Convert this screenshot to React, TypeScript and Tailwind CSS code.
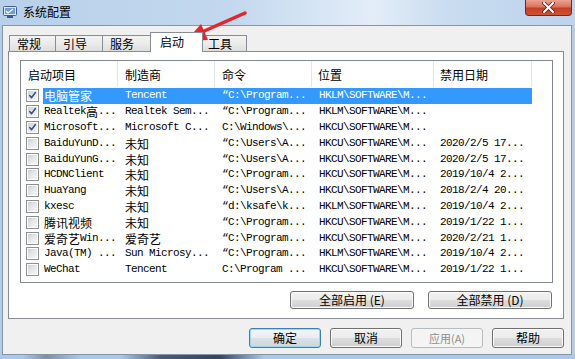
import React from "react";

const CJK = /([\u2E80-\u9FFF\uF900-\uFAFF\uFF00-\uFFEF]+)/;

function Mixed({ text }: { text: string }) {
  const parts = text.split(CJK).filter((p) => p.length > 0);
  return (
    <>
      {parts.map((p, i) =>
        /[\u2E80-\u9FFF\uF900-\uFAFF\uFF00-\uFFEF]/.test(p) ? (
          <span key={i} className="font-['Noto_Sans_CJK_SC',sans-serif] text-[12px] leading-[15px]">
            {p}
          </span>
        ) : (
          <span key={i} className="font-['Liberation_Mono',monospace] text-[11px] tracking-[-0.6px] leading-[15px]">
            {p}
          </span>
        )
      )}
    </>
  );
}

type Row = { on: boolean; name: string; maker: string; cmd: string; loc: string; date: string };

const rows: Row[] = [
  { on: true, name: "电脑管家", maker: "Tencent", cmd: "“C:\\Program...", loc: "HKLM\\SOFTWARE\\M...", date: "" },
  { on: true, name: "Realtek高...", maker: "Realtek Sem...", cmd: "“C:\\Program...", loc: "HKLM\\SOFTWARE\\M...", date: "" },
  { on: true, name: "Microsoft...", maker: "Microsoft C...", cmd: "C:\\Windows\\...", loc: "HKCU\\SOFTWARE\\M...", date: "" },
  { on: false, name: "BaiduYunD...", maker: "未知", cmd: "“C:\\Users\\A...", loc: "HKCU\\SOFTWARE\\M...", date: "2020/2/5 17..." },
  { on: false, name: "BaiduYunG...", maker: "未知", cmd: "“C:\\Users\\A...", loc: "HKCU\\SOFTWARE\\M...", date: "2020/2/5 17..." },
  { on: false, name: "HCDNClient", maker: "未知", cmd: "“C:\\Program...", loc: "HKCU\\SOFTWARE\\M...", date: "2019/10/4 2..." },
  { on: false, name: "HuaYang", maker: "未知", cmd: "“C:\\Users\\A...", loc: "HKCU\\SOFTWARE\\M...", date: "2018/2/4 20..." },
  { on: false, name: "kxesc", maker: "未知", cmd: "“d:\\ksafe\\k...", loc: "HKLM\\SOFTWARE\\M...", date: "2019/10/4 2..." },
  { on: false, name: "腾讯视频", maker: "未知", cmd: "“C:\\Program...", loc: "HKCU\\SOFTWARE\\M...", date: "2019/1/22 1..." },
  { on: false, name: "爱奇艺Win...", maker: "爱奇艺", cmd: "“C:\\Program...", loc: "HKCU\\SOFTWARE\\M...", date: "2020/2/21 1..." },
  { on: false, name: "Java(TM) ...", maker: "Sun Microsy...", cmd: "“C:\\Program...", loc: "HKLM\\SOFTWARE\\M...", date: "2019/10/4 2..." },
  { on: false, name: "WeChat", maker: "Tencent", cmd: "C:\\Program ...", loc: "HKCU\\SOFTWARE\\M...", date: "2019/1/22 1..." },
];

function Checkbox({ checked }: { checked: boolean }) {
  return (
    <div className="w-[13px] h-[13px] border border-[#8e8f8f] bg-white p-px">
      <div className="w-full h-full bg-[linear-gradient(135deg,#cbcfd5_0%,#e6e8eb_50%,#f6f6f6_100%)] flex items-center justify-center">
        {checked && (
          <svg width="11" height="11" viewBox="0 0 11 11">
            <path d="M2 5.5 L4.3 8.2 L9 1.8" fill="none" stroke="#3b4f94" strokeWidth="1.9" strokeLinecap="round" strokeLinejoin="round" />
          </svg>
        )}
      </div>
    </div>
  );
}

function Btn({ label, kind }: { label: string; kind: "normal" | "default" | "disabled" }) {
  if (kind === "default") {
    return (
      <div className="h-[20px] w-[72px] rounded-[3px] border border-[#3c7fb1] shadow-[inset_0_0_0_1px_#9fd6f4] bg-[linear-gradient(180deg,#f2f5f8_0%,#e9edf1_50%,#dbe1e6_51%,#cdd5dc_100%)] flex items-center justify-center text-[12px] text-black font-['Noto_Sans_CJK_SC',sans-serif] leading-none">
        {label}
      </div>
    );
  }
  if (kind === "disabled") {
    return (
      <div className="h-[20px] w-[72px] rounded-[3px] border border-[#b8bcbf] bg-[#f4f4f4] flex items-center justify-center text-[11px] text-[#8d8d8d] font-['Noto_Sans_CJK_SC',sans-serif] leading-none">
        {label}
      </div>
    );
  }
  return (
    <div className="h-[20px] w-[72px] rounded-[3px] border border-[#707070] shadow-[inset_0_0_0_1px_#fbfbfb] bg-[linear-gradient(180deg,#f2f2f2_0%,#ebebeb_50%,#dddddd_51%,#cfcfcf_100%)] flex items-center justify-center text-[12px] text-black font-['Noto_Sans_CJK_SC',sans-serif] leading-none">
      {label}
    </div>
  );
}

function WideBtn({ label }: { label: string }) {
  return (
    <div className="h-[18px] w-[124px] rounded-[3px] border border-[#707070] shadow-[inset_0_0_0_1px_#fbfbfb] bg-[linear-gradient(180deg,#f2f2f2_0%,#ebebeb_50%,#dddddd_51%,#cfcfcf_100%)] flex items-center justify-center text-[12px] text-black font-['Noto_Sans_CJK_SC',sans-serif] leading-none">
      {label}
    </div>
  );
}

export default function App() {
  return (
    <div className="relative w-[575px] h-[359px] overflow-hidden bg-[#b3cde9] flex flex-col">
      {/* Title bar */}
      <div className="h-[25px] flex items-start bg-[linear-gradient(90deg,#b8d0ea_0%,#c3d8ee_40%,#d6e5f4_55%,#e3edf8_65%,#c9dcf0_78%,#bcd3ec_100%)]">
        <div className="flex items-center h-[24px] pl-[3px] gap-[6px]">
          <svg width="14" height="14" viewBox="0 0 14 14">
            <rect x="0.5" y="1.5" width="13" height="9" rx="1" fill="#dfe8f5" stroke="#3d5d94" />
            <rect x="2" y="3" width="10" height="6" fill="#6f9bd6" />
            <path d="M3 6 L5 8 L10 4" fill="none" stroke="#ffffff" strokeWidth="1.2" />
            <rect x="4" y="11" width="6" height="2" fill="#3d5d94" />
          </svg>
          <span className="text-[12px] text-black font-['Noto_Sans_CJK_SC',sans-serif] leading-none">系统配置</span>
        </div>
        <div className="ml-auto mr-[3px] w-[47px] h-[16px] rounded-b-[4px] border border-t-0 border-[#6e2a1d] bg-[linear-gradient(180deg,#eba392_0%,#dc725c_45%,#c43f25_55%,#cf5234_100%)] flex items-center justify-center">
          <svg width="13" height="11" viewBox="0 0 13 11">
            <path d="M2 1 L11 10 M11 1 L2 10" stroke="#5b2418" strokeWidth="3.6" strokeLinecap="round" />
            <path d="M2 1 L11 10 M11 1 L2 10" stroke="#ffffff" strokeWidth="2" strokeLinecap="round" />
          </svg>
        </div>
      </div>

      {/* Window body */}
      <div className="ml-[2px] w-[570px] h-[330px] border border-[#8596ab] bg-[#f0f0f0] flex flex-col">
        {/* Tabs + panel */}
        <div className="ml-[5px] mt-[6px] w-[556px] flex flex-col">
          <div className="h-[19px] flex items-end pl-[1px] font-['Noto_Sans_CJK_SC',sans-serif] text-[12px] leading-none text-black">
            <div className="w-[47px] h-[16px] border border-b-0 border-[#898c95] bg-[linear-gradient(180deg,#f3f3f3_0%,#ebebeb_50%,#dedede_100%)] pl-[7px] flex items-center">常规</div>
            <div className="-ml-px w-[48px] h-[16px] border border-b-0 border-[#898c95] bg-[linear-gradient(180deg,#f3f3f3_0%,#ebebeb_50%,#dedede_100%)] pl-[7px] flex items-center">引导</div>
            <div className="-ml-px w-[49px] h-[16px] border border-b-0 border-[#898c95] bg-[linear-gradient(180deg,#f3f3f3_0%,#ebebeb_50%,#dedede_100%)] pl-[7px] flex items-center">服务</div>
            <div className="-ml-px relative z-10 -mb-px w-[53px] h-[20px] border border-b-0 border-[#898c95] bg-white pl-[9px] pb-[1px] flex items-center">启动</div>
            <div className="-ml-px w-[45px] h-[16px] border border-b-0 border-[#898c95] bg-[linear-gradient(180deg,#f3f3f3_0%,#ebebeb_50%,#dedede_100%)] pl-[5px] flex items-center">工具</div>
          </div>
          <div className="h-[268px] border border-[#898c95] bg-white pt-[8px] pl-[11px] flex flex-col">
            {/* List view */}
            <div className="w-[533px] h-[223px] border border-[#828790] bg-white flex flex-col overflow-hidden">
              <div className="h-[26px] flex text-[12px] text-black font-['Noto_Sans_CJK_SC',sans-serif] leading-none">
                <div className="w-[97px] border-r border-[#e5e5e5] pl-[7px] pt-[2px] flex items-center">启动项目</div>
                <div className="w-[97px] border-r border-[#e5e5e5] pl-[7px] pt-[2px] flex items-center">制造商</div>
                <div className="w-[97px] border-r border-[#e5e5e5] pl-[7px] pt-[2px] flex items-center">命令</div>
                <div className="w-[122px] border-r border-[#e5e5e5] pl-[6px] pt-[2px] flex items-center">位置</div>
                <div className="w-[98px] border-r border-[#e5e5e5] pl-[6px] pt-[2px] flex items-center">禁用日期</div>
                <div className="flex-1" />
              </div>
              <div className="mt-px flex flex-col">
                {rows.map((r, i) => (
                  <div key={i} className="flex h-[15.8px] items-center whitespace-nowrap">
                    <div className="w-[22px] pl-[5px] flex items-center">
                      <Checkbox checked={r.on} />
                    </div>
                    <div className={i === 0 ? "flex h-full items-center bg-[#3399ff] text-white" : "flex h-full items-center text-black"}>
                      <div className="w-[75px] h-full pl-[1px] overflow-hidden flex items-center">
                        <Mixed text={r.name} />
                      </div>
                      <div className="w-[97px] h-full pl-[7px] overflow-hidden flex items-center">
                        <Mixed text={r.maker} />
                      </div>
                      <div className="w-[97px] h-full pl-[7px] overflow-hidden flex items-center">
                        <Mixed text={r.cmd} />
                      </div>
                      <div className="w-[122px] h-full pl-[7px] overflow-hidden flex items-center">
                        <Mixed text={r.loc} />
                      </div>
                      <div className="w-[98px] h-full pl-[6px] overflow-hidden flex items-center">
                        <Mixed text={r.date} />
                      </div>
                    </div>
                  </div>
                ))}
              </div>
            </div>
            <div className="mt-[8px] w-[533px] flex justify-end gap-[14px] pr-[1px]">
              <WideBtn label="全部启用 (E)" />
              <WideBtn label="全部禁用 (D)" />
            </div>
          </div>
        </div>
        {/* Bottom buttons */}
        <div className="mt-[9px] flex justify-end gap-[9px] pr-[7px]">
          <Btn label="确定" kind="default" />
          <Btn label="取消" kind="normal" />
          <Btn label="应用(A)" kind="disabled" />
          <Btn label="帮助" kind="normal" />
        </div>
      </div>
      <div className="flex-1 bg-[linear-gradient(90deg,#aac8ea_0%,#aac8ea_4%,#7d8fa6_8%,#aac8ea_14%,#aac8ea_21%,#4b5b72_28%,#34455c_38%,#aac8ea_46%,#aac8ea_100%)]" />

      {/* Red annotation arrow */}
      <svg className="absolute left-0 top-0 pointer-events-none" width="575" height="359" viewBox="0 0 575 359">
        <line x1="245" y1="13" x2="202" y2="32" stroke="#e3262b" strokeWidth="3.5" strokeLinecap="round" />
        <polygon points="186,41 201,24 208,40" fill="#e3262b" />
      </svg>
    </div>
  );
}
